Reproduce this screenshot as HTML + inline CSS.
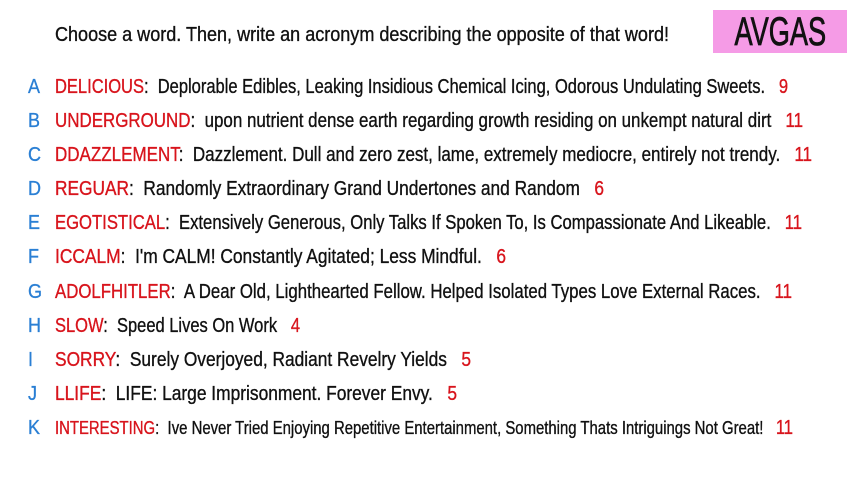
<!DOCTYPE html>
<html><head><meta charset="utf-8"><style>
body{margin:0;width:853px;height:480px;background:#fff;overflow:hidden;position:relative;font-family:"Liberation Sans Narrow","Liberation Sans",sans-serif;}
.l{position:absolute;left:55px;white-space:nowrap;font-size:20px;line-height:20px;color:#111;transform-origin:0 50%;-webkit-text-stroke:0.35px #111;}
.k{position:absolute;left:28px;font-size:20px;line-height:20px;color:#2a7fd4;transform:scaleX(0.9);transform-origin:0 50%;-webkit-text-stroke:0.3px #2a7fd4;}
.r{color:#d8141c;-webkit-text-stroke:0.35px #d8141c}
.box{position:absolute;left:713px;top:10px;width:134px;height:43px;background:#f59be6;}
.box span{position:absolute;left:0;right:0;top:2px;text-align:center;font-size:40px;line-height:40px;color:#111;transform:scaleX(0.68);-webkit-text-stroke:0.8px #111;}
</style></head><body>
<div class="box"><span>AVGAS</span></div>
<div class="l" data-w="614" style="top:25px">Choose a word. Then, write an acronym describing the opposite of that word!</div>
<div class="k" style="top:77px">A</div><div class="l" data-w="733" style="top:77px"><span class="r">DELICIOUS</span>:&nbsp; Deplorable Edibles, Leaking Insidious Chemical Icing, Odorous Undulating Sweets.&nbsp;&nbsp; <span class="r">9</span></div>
<div class="k" style="top:111px">B</div><div class="l" data-w="748" style="top:111px"><span class="r">UNDERGROUND</span>:&nbsp; upon nutrient dense earth regarding growth residing on unkempt natural dirt&nbsp;&nbsp; <span class="r">11</span></div>
<div class="k" style="top:145px">C</div><div class="l" data-w="757" style="top:145px"><span class="r">DDAZZLEMENT</span>:&nbsp; Dazzlement. Dull and zero zest, lame, extremely mediocre, entirely not trendy.&nbsp;&nbsp; <span class="r">11</span></div>
<div class="k" style="top:179px">D</div><div class="l" data-w="549" style="top:179px"><span class="r">REGUAR</span>:&nbsp; Randomly Extraordinary Grand Undertones and Random&nbsp;&nbsp; <span class="r">6</span></div>
<div class="k" style="top:213px">E</div><div class="l" data-w="747" style="top:213px"><span class="r">EGOTISTICAL</span>:&nbsp; Extensively Generous, Only Talks If Spoken To, Is Compassionate And Likeable.&nbsp;&nbsp; <span class="r">11</span></div>
<div class="k" style="top:247px">F</div><div class="l" data-w="451" style="top:247px"><span class="r">ICCALM</span>:&nbsp; I'm CALM! Constantly Agitated; Less Mindful.&nbsp;&nbsp; <span class="r">6</span></div>
<div class="k" style="top:282px">G</div><div class="l" data-w="737" style="top:282px"><span class="r">ADOLFHITLER</span>:&nbsp; A Dear Old, Lighthearted Fellow. Helped Isolated Types Love External Races.&nbsp;&nbsp; <span class="r">11</span></div>
<div class="k" style="top:316px">H</div><div class="l" data-w="245" style="top:316px"><span class="r">SLOW</span>:&nbsp; Speed Lives On Work&nbsp;&nbsp; <span class="r">4</span></div>
<div class="k" style="top:350px">I</div><div class="l" data-w="416" style="top:350px"><span class="r">SORRY</span>:&nbsp; Surely Overjoyed, Radiant Revelry Yields&nbsp;&nbsp; <span class="r">5</span></div>
<div class="k" style="top:384px">J</div><div class="l" data-w="402" style="top:384px"><span class="r">LLIFE</span>:&nbsp; LIFE: Large Imprisonment. Forever Envy.&nbsp;&nbsp; <span class="r">5</span></div>
<div class="k" style="top:418px">K</div><div class="l" data-w="738" style="top:418px;font-size:18px"><span class="r">INTERESTING</span>:&nbsp; Ive Never Tried Enjoying Repetitive Entertainment, Something Thats Intriguings Not Great!&nbsp;&nbsp; <span class="r" style="font-size:20px">11</span></div>
<script>
document.querySelectorAll('.l').forEach(function(e){var w=e.getBoundingClientRect().width;var t=+e.getAttribute('data-w');e.style.transform='scaleX('+(t/w)+')';});
</script>
</body></html>
